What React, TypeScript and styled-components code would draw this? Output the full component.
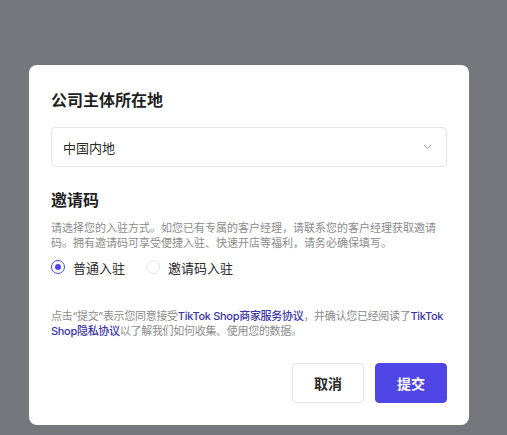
import { useState } from "react";
import styled, { createGlobalStyle } from "styled-components";

const GlobalStyle = createGlobalStyle`
  html, body {
    margin: 0;
    padding: 0;
    background: #75777c;
  }
  body {
    font-family: Inter, "Noto Sans CJK SC", sans-serif;
  }
`;

const Page = styled.div`
  width: 507px;
  height: 435px;
  box-sizing: border-box;
  padding: 65px 0 0 29px;
  background: #75777c;
  overflow: hidden;
`;

const Modal = styled.div`
  width: 440px;
  height: 360px;
  box-sizing: border-box;
  padding: 23px 22px 22px;
  background: #ffffff;
  border-radius: 8px;
  display: flex;
  flex-direction: column;
`;

const SectionTitle = styled.h2<{ $top?: number }>`
  margin: ${(p) => p.$top ?? 0}px 0 0;
  font-size: 16px;
  line-height: 24px;
  font-weight: 700;
  color: #1f1f1f;
`;

const Select = styled.div`
  margin-top: 15px;
  height: 40px;
  box-sizing: border-box;
  border: 1px solid #e4e4e6;
  border-radius: 4px;
  padding: 0 14px 0 11px;
  display: flex;
  align-items: center;
  justify-content: space-between;
  font-size: 13px;
  color: #2a2a2a;
`;

const Description = styled.p`
  margin: 9px 0 0;
  font-size: 11px;
  line-height: 15px;
  color: #8c8c8c;
`;

const RadioRow = styled.div`
  margin-top: 6px;
  height: 20px;
  display: flex;
  align-items: center;
  gap: 21px;
`;

const RadioOption = styled.label`
  display: flex;
  align-items: center;
  gap: 8px;
  font-size: 13px;
  color: #2a2a2a;
  cursor: pointer;
`;

const RadioCircle = styled.span<{ $checked: boolean }>`
  width: 14px;
  height: 14px;
  box-sizing: border-box;
  border-radius: 50%;
  border: 1px solid ${(p) => (p.$checked ? "#4f46e5" : "#e6e6e8")};
  display: flex;
  align-items: center;
  justify-content: center;

  &::after {
    content: "";
    width: 6px;
    height: 6px;
    border-radius: 50%;
    background: ${(p) => (p.$checked ? "#4f46e5" : "transparent")};
  }
`;

const Agreement = styled.p`
  margin: 32px 0 0;
  font-size: 11px;
  line-height: 15px;
  letter-spacing: -0.3px;
  color: #8c8c8c;
`;

const Link = styled.a`
  color: #3b35a6;
  font-weight: 500;
  text-decoration: none;
`;

const Footer = styled.div`
  margin-top: auto;
  display: flex;
  justify-content: flex-end;
  gap: 11px;
`;

const Button = styled.button<{ $primary?: boolean }>`
  width: 72px;
  height: 40px;
  border-radius: 4px;
  font-family: inherit;
  font-size: 14px;
  font-weight: 600;
  cursor: pointer;
  border: 1px solid ${(p) => (p.$primary ? "#4f46e5" : "#e4e4e6")};
  background: ${(p) => (p.$primary ? "#4f46e5" : "#ffffff")};
  color: ${(p) => (p.$primary ? "#ffffff" : "#2a2a2a")};
`;

const Chevron = () => (
  <svg width="9" height="6" viewBox="0 0 9 6" fill="none">
    <path d="M1 1l3.5 3.5L8 1" stroke="#9a9a9a" strokeWidth="1" />
  </svg>
);

const options = ["普通入驻", "邀请码入驻"];

export default function App() {
  const [mode, setMode] = useState(0);

  return (
    <Page>
      <GlobalStyle />
      <Modal>
        <SectionTitle>公司主体所在地</SectionTitle>
        <Select>
          <span>中国内地</span>
          <Chevron />
        </Select>

        <SectionTitle $top={21}>邀请码</SectionTitle>
        <Description>
          请选择您的入驻方式。如您已有专属的客户经理，请联系您的客户经理获取邀请码。拥有邀请码可享受便捷入驻、快速开店等福利，请务必确保填写。
        </Description>
        <RadioRow>
          {options.map((label, i) => (
            <RadioOption key={label} onClick={() => setMode(i)}>
              <RadioCircle $checked={mode === i} />
              {label}
            </RadioOption>
          ))}
        </RadioRow>

        <Agreement>
          点击“提交”表示您同意接受<Link>TikTok Shop商家服务协议</Link>，并确认您已经阅读了
          <Link>TikTok Shop隐私协议</Link>以了解我们如何收集、使用您的数据。
        </Agreement>

        <Footer>
          <Button>取消</Button>
          <Button $primary>提交</Button>
        </Footer>
      </Modal>
    </Page>
  );
}
